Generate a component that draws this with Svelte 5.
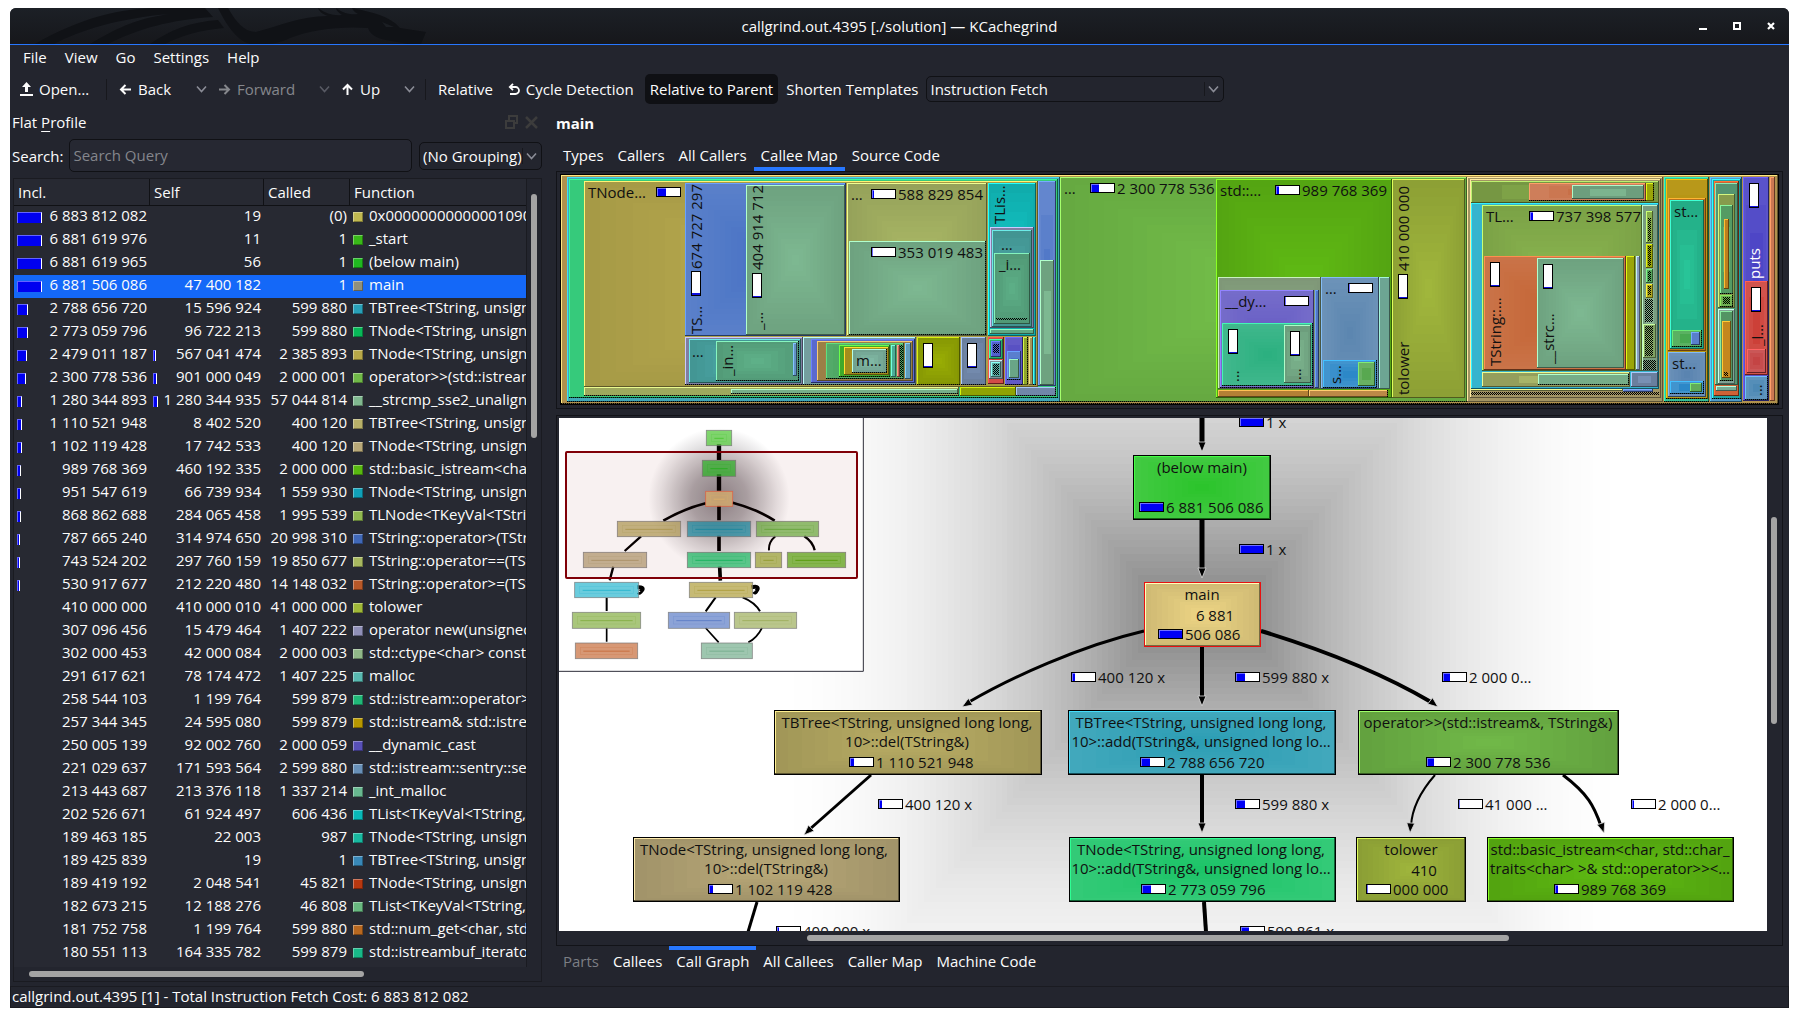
<script>
  const menus = ['File', 'View', 'Go', 'Settings', 'Help'];
  const topTabs = ['Types', 'Callers', 'All Callers', 'Callee Map', 'Source Code'];
  const bottomTabs = ['Parts', 'Callees', 'Call Graph', 'All Callees', 'Caller Map', 'Machine Code'];

  // incl, incl bar, self, self bar, called, colour, function
  const rows = [
    ['6 883 812 082', 25, '19', 0, '(0)', '#c0b850', '0x00000000000001090'],
    ['6 881 619 976', 25, '11', 0, '1', '#38b818', '_start'],
    ['6 881 619 965', 25, '56', 0, '1', '#20b820', '(below main)'],
    ['6 881 506 086', 25, '47 400 182', 0, '1', '#90907c', 'main'],
    ['2 788 656 720', 11, '15 596 924', 0, '599 880', '#28a0b8', 'TBTree<TString, unsigned long long, 10>::add'],
    ['2 773 059 796', 11, '96 722 213', 0, '599 880', '#08b858', 'TNode<TString, unsigned long long, 10>::add'],
    ['2 479 011 187', 10, '567 041 474', 3, '2 385 893', '#b8a848', 'TNode<TString, unsigned long long, 10>::find'],
    ['2 300 778 536', 9, '901 000 049', 4, '2 000 001', '#70b848', 'operator>>(std::istream&, TString&)'],
    ['1 280 344 893', 5, '1 280 344 935', 5, '57 044 814', '#80b890', '__strcmp_sse2_unaligned'],
    ['1 110 521 948', 5, '8 402 520', 0, '400 120', '#b8b068', 'TBTree<TString, unsigned long long, 10>::del'],
    ['1 102 119 428', 5, '17 742 533', 0, '400 120', '#b8a878', 'TNode<TString, unsigned long long, 10>::del'],
    ['989 768 369', 4, '460 192 335', 0, '2 000 000', '#58b810', 'std::basic_istream<char, std::char_traits>'],
    ['951 547 619', 4, '66 739 934', 0, '1 559 930', '#10a0b8', 'TNode<TString, unsigned long long, 10>'],
    ['868 862 688', 4, '284 065 458', 0, '1 995 539', '#90b850', 'TLNode<TKeyVal<TString, unsigned>>'],
    ['787 665 240', 3, '314 974 650', 0, '20 998 310', '#4068b8', 'TString::operator>(TString const&)'],
    ['743 524 202', 3, '297 760 159', 0, '19 850 677', '#a8b860', 'TString::operator==(TString const&)'],
    ['530 917 677', 3, '212 220 480', 0, '14 148 032', '#b85828', 'TString::operator>=(TString const&)'],
    ['410 000 000', 0, '410 000 010', 0, '41 000 000', '#a0b838', 'tolower'],
    ['307 096 456', 0, '15 479 464', 0, '1 407 222', '#9090b8', 'operator new(unsigned long)'],
    ['302 000 453', 0, '42 000 084', 0, '2 000 003', '#90b888', 'std::ctype<char> const& std::use_facet'],
    ['291 617 621', 0, '78 174 472', 0, '1 407 225', '#58b8b0', 'malloc'],
    ['258 544 103', 0, '1 199 764', 0, '599 879', '#20b878', 'std::istream::operator>>(unsigned long&)'],
    ['257 344 345', 0, '24 595 080', 0, '599 879', '#b89800', 'std::istream& std::istream::_M_extract'],
    ['250 005 139', 0, '92 002 760', 0, '2 000 059', '#5850b8', '__dynamic_cast'],
    ['221 029 637', 0, '171 593 564', 0, '2 599 880', '#6890b8', 'std::istream::sentry::sentry'],
    ['213 443 687', 0, '213 376 118', 0, '1 337 214', '#68b890', '_int_malloc'],
    ['202 526 671', 0, '61 924 497', 0, '606 436', '#08b8b8', 'TList<TKeyVal<TString, unsigned>>'],
    ['189 463 185', 0, '22 003', 0, '987', '#18b8a0', 'TNode<TString, unsigned long long, 10>'],
    ['189 425 839', 0, '19', 0, '1', '#3888b8', 'TBTree<TString, unsigned long long, 10>'],
    ['189 419 192', 0, '2 048 541', 0, '45 821', '#b83810', 'TNode<TString, unsigned long long, 10>'],
    ['182 673 215', 0, '12 188 276', 0, '46 808', '#68b880', 'TList<TKeyVal<TString, unsigned>>'],
    ['181 752 758', 0, '1 199 764', 0, '599 880', '#b86820', 'std::num_get<char, std::istreambuf>'],
    ['180 551 113', 0, '164 335 782', 0, '599 879', '#18b888', 'std::istreambuf_iterator<char>']
  ];

  const rgb = (c) => [1, 3, 5].map((i) => parseInt(c.slice(i, i + 2), 16));
  const css = (a) => `rgb(${a.map((v) => Math.round(v)).join(',')})`;
  const mix = (a, b, t) => a.map((v, i) => v + (b[i] - v) * t);
  function tones(c) {
    const m = rgb(c);
    const luma = m[0] * 0.3 + m[1] * 0.59 + m[2] * 0.11;
    return { mid: m, rim: luma > 138 ? m.map((v) => v * 0.88) : mix(m, [255, 255, 255], 0.1) };
  }
  const lightOf = (c) => css(rgb(c).map((v) => Math.min(255, v * 1.35 + 8)));
  const darkOf = (c) => css(rgb(c).map((v) => v * 0.5));

  // Cushion shading: nested frames that step from the rim tone to the middle tone
  function cushion(x, y, w, h, c) {
    const { mid, rim } = tones(c);
    const n = Math.max(1, Math.min(14, Math.floor(Math.min(w, h) / 6)));
    return Array.from({ length: n }, (_, i) => ({
      x: x + (w / 2) * (i / n),
      y: y + (h / 2) * (i / n),
      w: w * (1 - i / n),
      h: h * (1 - i / n),
      f: css(mix(rim, mid, n === 1 ? 0.5 : i / (n - 1)))
    }));
  }

  // left, top, right, bottom, colour, dotted sides (b, r) or f for a dotted fill
  const cells = [
    [561, 175, 1778, 404, '#c8a558', 'b'],
    [567, 177, 1060, 402, '#2b9eb0', 'b'],
    [569, 179, 1058, 398, '#20c46c', 'b'],
    [584, 181, 1038, 387, '#bdaf50'],
    [1038, 181, 1056, 386, '#5279c8'],
    [1040, 260, 1054, 385, '#7db891'],
    [685, 183, 846, 336, '#4872c4'],
    [746, 185, 845, 335, '#7db891'],
    [847, 183, 987, 336, '#aab866'],
    [849, 241, 986, 335, '#7db891', 'br'],
    [988, 183, 1036, 336, '#12c4c4'],
    [990, 227, 1034, 328, '#9090b8'],
    [992, 230, 1032, 327, '#4ba8a6'],
    [994, 253, 1030, 324, '#5cae86'],
    [996, 318, 1027, 320, '#5cae86', 'f'],
    [990, 329, 1034, 334, '#64b48c'],
    [685, 337, 803, 385, '#9090b8', 'b'],
    [689, 339, 801, 383, '#4caaa8'],
    [716, 341, 799, 381, '#5eb088', 'br'],
    [793, 343, 797, 376, '#5a8cc0'],
    [803, 337, 916, 385, '#84b4b4', 'b'],
    [811, 339, 915, 383, '#4858c8'],
    [817, 341, 913, 381, '#b09050'],
    [826, 343, 904, 379, '#40a058', 'b'],
    [839, 345, 890, 377, '#48c030', 'b'],
    [844, 347, 889, 375, '#b8a020'],
    [852, 349, 887, 373, '#80b8a4', 'br'],
    [891, 345, 896, 377, '#50b8a0'],
    [897, 345, 900, 377, '#d07060'],
    [900, 345, 903, 377, '#40a058', 'f'],
    [905, 343, 911, 379, '#5a98b8'],
    [917, 337, 960, 385, '#98ac04', 'b'],
    [961, 337, 986, 385, '#7890b4', 'b'],
    [988, 337, 1004, 384, '#cc3832'],
    [989, 339, 1003, 359, '#30c878'],
    [991, 341, 1001, 357, '#4858c8'],
    [993, 344, 999, 353, '#4858c8', 'f'],
    [989, 360, 1003, 379, '#90a8b0'],
    [991, 362, 1001, 377, '#60b8b0'],
    [993, 364, 999, 375, '#60b8b0', 'f'],
    [1005, 337, 1023, 385, '#5048c0', 'b'],
    [1007, 351, 1021, 380, '#4870c8', 'b'],
    [1009, 359, 1019, 378, '#70b090'],
    [1023, 337, 1028, 385, '#98b030', 'r'],
    [1029, 337, 1033, 385, '#b0a060'],
    [1033, 337, 1036, 385, '#28c8c8', 'b'],
    [584, 387, 959, 396, '#a8b464', 'b'],
    [731, 389, 958, 394, '#7db891', 'b'],
    [960, 387, 1016, 396, '#98ac04'],
    [1016, 387, 1056, 396, '#7890b4', 'br'],
    [1060, 177, 1467, 402, '#74c04a', 'b'],
    [1216, 179, 1392, 398, '#60bb14'],
    [1218, 277, 1321, 389, '#90ac88'],
    [1220, 290, 1314, 388, '#665cc4', 'b'],
    [1315, 290, 1319, 388, '#4870c0'],
    [1222, 323, 1313, 386, '#2cb080', 'br'],
    [1284, 325, 1311, 383, '#7cb48e'],
    [1321, 277, 1379, 389, '#5c86b0'],
    [1323, 360, 1377, 388, '#2c88c8', 'br'],
    [1358, 362, 1375, 386, '#58a850'],
    [1379, 277, 1390, 389, '#74b09c'],
    [1218, 390, 1309, 397, '#c08838'],
    [1309, 390, 1388, 397, '#c8924c', 'r'],
    [1392, 179, 1465, 398, '#a0b63c'],
    [1467, 177, 1663, 402, '#b8a870'],
    [1470, 179, 1661, 398, '#b8a870'],
    [1471, 181, 1659, 203, '#86ac4c'],
    [1529, 183, 1646, 201, '#c87048', 'b'],
    [1572, 185, 1644, 199, '#7cb48e'],
    [1646, 183, 1654, 201, '#a4b008', 'r'],
    [1471, 203, 1659, 389, '#20acc8'],
    [1482, 205, 1642, 371, '#8cb850'],
    [1484, 256, 1626, 370, '#c46434'],
    [1537, 258, 1624, 368, '#7db891'],
    [1626, 256, 1635, 370, '#a4b008'],
    [1636, 256, 1640, 370, '#90a8c8'],
    [1642, 205, 1658, 371, '#88b090'],
    [1646, 211, 1653, 243, '#90b850'],
    [1648, 218, 1651, 241, '#90b850', 'f'],
    [1646, 244, 1653, 268, '#a4b008'],
    [1648, 246, 1651, 266, '#a4b008', 'f'],
    [1646, 269, 1653, 283, '#58b060'],
    [1648, 271, 1651, 281, '#58b060', 'f'],
    [1646, 284, 1653, 298, '#b8b020'],
    [1648, 286, 1651, 295, '#b8b020', 'f'],
    [1645, 299, 1653, 322, '#88b090', 'f'],
    [1643, 324, 1656, 358, '#90b870'],
    [1645, 326, 1653, 356, '#90b870', 'f'],
    [1643, 360, 1656, 370, '#88b090', 'f'],
    [1482, 372, 1630, 387, '#a8b468'],
    [1538, 374, 1629, 385, '#7db891', 'br'],
    [1631, 372, 1658, 387, '#7890b4'],
    [1471, 389, 1623, 391, '#b0b868'],
    [1623, 389, 1653, 392, '#5878c8'],
    [1471, 392, 1659, 395, '#b8a870', 'f'],
    [1664, 177, 1709, 402, '#20b888', 'b'],
    [1666, 179, 1708, 399, '#b08c00', 'b'],
    [1668, 198, 1706, 351, '#d08020'],
    [1670, 200, 1704, 349, '#28c498'],
    [1672, 330, 1702, 347, '#48a850', 'br'],
    [1691, 332, 1700, 345, '#5078c8'],
    [1668, 352, 1706, 397, '#5a84b0'],
    [1670, 381, 1704, 394, '#2c88c8', 'br'],
    [1690, 383, 1702, 392, '#58a850'],
    [1710, 177, 1742, 402, '#3c90c0'],
    [1712, 179, 1741, 399, '#20b8b8', 'b'],
    [1714, 181, 1739, 396, '#c85020'],
    [1715, 183, 1738, 385, '#60a880'],
    [1718, 194, 1735, 308, '#98b058'],
    [1720, 205, 1733, 294, '#60b070', 'b'],
    [1724, 219, 1729, 289, '#c88820'],
    [1720, 295, 1733, 307, '#60a840', 'br'],
    [1723, 297, 1730, 304, '#60a840', 'f'],
    [1718, 309, 1735, 384, '#90b8a8'],
    [1720, 311, 1733, 381, '#60a870', 'b'],
    [1722, 321, 1731, 378, '#d09020'],
    [1724, 372, 1728, 376, '#d09020', 'f'],
    [1716, 386, 1737, 391, '#80b8a0'],
    [1743, 177, 1769, 401, '#4840c4'],
    [1745, 281, 1768, 375, '#cc4038'],
    [1747, 349, 1766, 373, '#c44444'],
    [1745, 376, 1768, 400, '#4c88b4', 'br'],
    [1770, 177, 1775, 401, '#c87048']
  ];

  // text, x, baseline, turned, white
  const mapTexts = [
    ['TNode…', 588, 198],
    ['674 727 297', 702, 269, 1],
    ['TS…', 702, 334, 1],
    ['404 914 712', 763, 270, 1],
    ['_…', 763, 330, 1],
    ['…', 851, 200],
    ['588 829 854', 898, 200],
    ['353 019 483', 898, 258],
    ['TLis…', 1005, 224, 1],
    ['…', 1001, 250],
    ['_i…', 999, 270],
    ['…', 692, 357],
    ['_in…', 733, 376, 1],
    ['m…', 856, 366],
    ['…', 1064, 194],
    ['2 300 778 536', 1117, 194],
    ['std::…', 1220, 196],
    ['989 768 369', 1302, 196],
    ['__dy…', 1225, 307],
    ['…', 1325, 294],
    ['…', 1239, 382, 1],
    ['…', 1301, 380, 1],
    ['s…', 1341, 384, 1],
    ['410 000 000', 1409, 271, 1],
    ['tolower', 1409, 395, 1],
    ['TL…', 1486, 222],
    ['737 398 577', 1556, 222],
    ['TString::…', 1501, 366, 1],
    ['__strc…', 1554, 364, 1],
    ['st…', 1674, 217],
    ['st…', 1672, 369],
    ['puts', 1760, 279, 1, 1],
    ['_l…', 1763, 346, 1],
    ['…', 1762, 396, 1]
  ];
  // x, y, blue length, upright
  const mapBars = [
    [656, 187, 9, 0], [691, 271, 2, 1], [752, 273, 1, 1], [871, 189, 2, 0], [871, 247, 1, 0],
    [923, 343, 1, 1], [967, 343, 1, 1], [1090, 183, 8, 0], [1275, 185, 3, 0], [1284, 296, 1, 0],
    [1348, 283, 1, 0], [1228, 329, 1, 1], [1290, 331, 1, 1], [1398, 274, 1, 1], [1529, 211, 3, 0],
    [1490, 262, 1, 1], [1543, 264, 1, 1], [1749, 183, 1, 1], [1751, 287, 1, 1]
  ];

  // Backdrop of the graph: frames growing out of the selected node
  const halo = Array.from({ length: 64 }, (_, i) => {
    const t = 1 - i / 64;
    const hw = 58 + t * 380, hh = 32 + t * 443;
    const v = Math.round(255 - 111 * (1 - t) * (1 - t));
    return { x: 1202 - hw, y: 614 - hh, w: hw * 2, h: hh * 2, f: `rgb(${v},${v},${v})` };
  });

  // x, y, w, colour, [text, x, dy, anchor], bar x, blue length
  const nodes = [
    { x: 1133, y: 455, w: 138, c: '#2cc42c', bx: 1139, b: 23, t: [['(below main)', 1202, 18, 'middle'], ['6 881 506 086', 1166, 58]] },
    { x: 1144, y: 582, w: 117, c: '#ecd484', bx: 1158, b: 23, sel: true, t: [['main', 1202, 18, 'middle'], ['6 881', 1215, 39, 'middle'], ['506 086', 1185, 58]] },
    { x: 774, y: 710, w: 268, c: '#b8ac64', bx: 849, b: 4, t: [['TBTree<TString, unsigned long long,', 907, 18, 'middle'], ['10>::del(TString&)', 907, 37, 'middle'], ['1 110 521 948', 876, 58]] },
    { x: 1068, y: 710, w: 268, c: '#2c9eb4', bx: 1140, b: 9, t: [['TBTree<TString, unsigned long long,', 1201, 18, 'middle'], ['10>::add(TString&, unsigned long lo…', 1201, 37, 'middle'], ['2 788 656 720', 1167, 58]] },
    { x: 1358, y: 710, w: 261, c: '#70b848', bx: 1426, b: 7, t: [['operator>>(std::istream&, TString&)', 1488, 18, 'middle'], ['2 300 778 536', 1453, 58]] },
    { x: 633, y: 837, w: 267, c: '#b8a878', bx: 708, b: 4, t: [['TNode<TString, unsigned long long,', 764, 18, 'middle'], ['10>::del(TString&)', 766, 37, 'middle'], ['1 102 119 428', 735, 58]] },
    { x: 1069, y: 837, w: 267, c: '#1cc468', bx: 1141, b: 9, t: [['TNode<TString, unsigned long long,', 1201, 18, 'middle'], ['10>::add(TString&, unsigned long lo…', 1201, 37, 'middle'], ['2 773 059 796', 1168, 58]] },
    { x: 1356, y: 837, w: 110, c: '#9eb43c', bx: 1366, b: 1, t: [['tolower', 1411, 18, 'middle'], ['410', 1424, 39, 'middle'], ['000 000', 1393, 58]] },
    { x: 1487, y: 837, w: 247, c: '#5eba12', bx: 1554, b: 3, t: [['std::basic_istream<char, std::char_', 1610, 18, 'middle'], ['traits<char> >& std::operator>><…', 1610, 37, 'middle'], ['989 768 369', 1581, 58]] }
  ];

  // path, width, head x, head y, head angle
  const edges = [
    ['M1202 418V442', 5, 1202, 452, 0],
    ['M1202 520V570', 5, 1202, 578, 0],
    ['M1202 647V698', 4, 1202, 706, 0],
    ['M1144 631C1080 646 1010 678 969 702', 3, 962, 707, 58],
    ['M1261 631C1330 652 1390 678 1431 702', 4, 1438, 707, -52],
    ['M871 775L810 829', 3, 804, 835, 46],
    ['M1202 775V825', 4, 1202, 833, 0],
    ['M1435 775C1420 792 1412 808 1411 826', 2, 1410, 833, 4],
    ['M1563 775C1588 794 1594 806 1601 826', 3, 1604, 833, -18],
    ['M757 902L748 932', 3],
    ['M1204 902L1206 932', 4]
  ];
  const labels = [
    ['1 x', 1239, 417, 23], ['1 x', 1239, 544, 23],
    ['400 120 x', 1071, 672, 3], ['599 880 x', 1235, 672, 9], ['2 000 0…', 1442, 672, 7],
    ['400 120 x', 878, 799, 3], ['599 880 x', 1235, 799, 9], ['41 000 …', 1458, 799, 1], ['2 000 0…', 1631, 799, 2],
    ['400 000 x', 776, 926, 2], ['599 861 x', 1240, 926, 8]
  ];

  // Thumbnail of the whole graph, in thirds of a pixel
  const mini = [
    [469, 76, 76, 46, '#50c838'], [457, 166, 100, 48, '#28b828'], [467, 259, 81, 45, '#e0b870', '#e86040'],
    [202, 349, 190, 46, '#b0a058'], [412, 349, 190, 46, '#1890a8'], [619, 349, 187, 46, '#68b040'],
    [100, 442, 190, 46, '#b09c70'], [412, 442, 190, 46, '#18c068'], [616, 442, 79, 46, '#98a838'], [712, 442, 175, 46, '#58a810'],
    [74, 532, 192, 46, '#30b8d0'], [418, 532, 190, 46, '#b0a040'], [67, 622, 205, 48, '#88b048'],
    [355, 622, 184, 48, '#6080c8'], [553, 622, 187, 48, '#a0b060'], [76, 714, 187, 47, '#c87040'], [454, 714, 153, 47, '#78b090']
  ];
  const miniEdges = [
    ['M507 118V165M507 208V257', 13], ['M507 302V346M507 392V438M509 485L511 527', 11],
    ['M467 295Q400 312 340 347M548 293Q620 312 674 347', 8],
    ['M273 394L224 438M190 485L179 526M763 394Q788 410 794 436', 7],
    ['M676 394Q655 412 657 436M170 578V618M497 577L467 619M578 577Q615 592 630 619', 6],
    ['M170 668V710M467 669L506 712M636 669Q620 700 595 712', 5],
    ['M262 547Q284 546 276 556T266 562M604 547Q628 542 622 554T612 560', 12]
  ];
</script>

{#snippet gauge(x, y, n, upright)}
  <g class="gauge" shape-rendering="crispEdges">
    {#if upright}
      <rect {x} {y} width="10" height="25" fill="#000" />
      <rect x={x + 1} y={y + 1} width="8" height="23" fill="#fff" />
      <rect x={x + 1} y={y + 24 - n} width="8" height={n} fill="#1010e0" />
    {:else}
      <rect {x} {y} width="25" height="10" fill="#000" />
      <rect x={x + 1} y={y + 1} width="23" height="8" fill="#fff" />
      <rect x={x + 1} y={y + 1} width={n} height="8" fill="#0000f4" />
      <path d="M{x + 1} {y + 9}V{y + 1}H{x + 1 + n}V{y + 2}H{x + 2}V{y + 9}Z" fill="#7070ff" />
    {/if}
  </g>
{/snippet}

{#snippet chevron()}
  <svg class="chev" width="11" height="8" viewBox="0 0 11 8" aria-hidden="true"><path d="M1 1.5L5.500 6.500L10 1.500" fill="none" stroke="currentColor" stroke-width="1.600" /></svg>
{/snippet}

{#snippet arrow(d)}
  <svg width="13" height="13" viewBox="0 0 13 13" aria-hidden="true"><path {d} fill="none" stroke="currentColor" stroke-width="2" /></svg>
{/snippet}

<div class="window">
  <header class="titlebar">
    <svg class="dragon" width="430" height="36" viewBox="0 0 430 36" aria-hidden="true">
      <g fill="#101216">
        <path d="M25 36C70 10 110 0 150 0L195 0L203 9C160 12 130 20 98 36H80C110 18 130 10 160 6C110 10 70 22 44 36Z" />
        <path d="M140 36C160 22 180 14 208 12L214 20C190 22 170 28 155 36Z" />
        <path d="M208 0H218C226 14 234 24 246 24C270 18 290 8 318 8C312 6 309 3 308 0C316 6 324 8 332 7C328 4 326 2 326 0C334 6 342 7 348 6C344 4 343 2 342 0C362 4 380 8 390 20L416 24L411 36H398L376 32C366 30 360 26 358 20C330 18 300 22 280 30C270 35 262 36 250 36H240C226 32 216 16 208 0Z" />
      </g>
      <path d="M372 14L384 19L376 19Z" fill="#1b1e23" />
    </svg>
    <h1>callgrind.out.4395 [./solution] — KCachegrind</h1>
    <div class="winbtns">
      <button aria-label="Minimize"><svg width="8" height="10" viewBox="0 0 8 10"><path d="M0 7H8V9H0Z" fill="#fff" /></svg></button>
      <button aria-label="Maximize"><svg width="8" height="10" viewBox="0 0 8 10"><path d="M1 2H7V8H1Z" fill="none" stroke="#fff" stroke-width="2" /></svg></button>
      <button aria-label="Close"><svg width="8" height="10" viewBox="0 0 8 10"><path d="M1 2L7 8M7 2L1 8" stroke="#fff" stroke-width="2.200" /></svg></button>
    </div>
  </header>

  <nav class="menubar">
    {#each menus as m}<button>{m}</button>{/each}
  </nav>

  <div class="toolbar">
    <button class="tool open">
      <svg width="13" height="14" viewBox="0 0 13 14" aria-hidden="true"><path d="M6.500 0L11 5H8V10H5V5H2ZM0 12H13V14H0Z" fill="currentColor" /></svg>
      Open…
    </button>
    <span class="sep"></span>
    <button class="tool drop back">{@render arrow('M12 6.5H2M6.500 2L2 6.500L6.500 11')}<span>Back</span>{@render chevron()}</button>
    <button class="tool drop off">{@render arrow('M1 6.5H11M6.500 2L11 6.500L6.500 11')}<span>Forward</span>{@render chevron()}</button>
    <button class="tool drop up">{@render arrow('M6.500 12V2M2 6.500L6.500 2L11 6.500')}<span>Up</span>{@render chevron()}</button>
    <span class="sep"></span>
    <button class="tool plain">Relative</button>
    <button class="tool cycle">
      <svg width="12" height="13" viewBox="0 0 12 13" aria-hidden="true"><path d="M2 4H7.500A3.500 3.500 0 0 1 7.500 11H2M5 0.800L1.800 4L5 7.200" fill="none" stroke="currentColor" stroke-width="1.800" /></svg>
      Cycle Detection
    </button>
    <button class="tool pressed" aria-pressed="true">Relative to Parent</button>
    <button class="tool plain">Shorten Templates</button>
    <label class="combo event">
      <select aria-label="Event type"><option>Instruction Fetch</option></select>
      {@render chevron()}
    </label>
  </div>

  <main class="content">
    <section class="dock">
      <div class="docktitle">
        <h2>Flat <u>P</u>rofile</h2>
        <button aria-label="Float"><svg width="13" height="14" viewBox="0 0 13 14"><path d="M4 5V1H12V8H9M1 6H9V13H1Z" fill="none" stroke="#3c3c3c" stroke-width="2" /></svg></button>
        <button aria-label="Close dock"><svg width="13" height="13" viewBox="0 0 13 13"><path d="M1 1L12 12M12 1L1 12" stroke="#3c3c3c" stroke-width="2.500" /></svg></button>
      </div>
      <div class="search">
        <label for="q">Search:</label>
        <input id="q" type="text" placeholder="Search Query" />
        <label class="combo group">
          <select aria-label="Grouping"><option>(No Grouping)</option></select>
          {@render chevron()}
        </label>
      </div>
      <div class="listframe">
        <div class="listrow">
          <div class="tablewrap">
            <table>
              <colgroup><col class="c1" /><col class="c2" /><col class="c3" /><col /></colgroup>
              <thead><tr><th>Incl.</th><th>Self</th><th>Called</th><th>Function</th></tr></thead>
              <tbody>
                {#each rows as r, i}
                  <tr class:selected={i === 3}>
                    <td><div class="num">{#if r[1]}<i class="bar" style:width="{r[1]}px"></i>{/if}<span>{r[0]}</span></div></td>
                    <td><div class="num">{#if r[3]}<i class="bar" style:width="{r[3]}px"></i>{/if}<span>{r[2]}</span></div></td>
                    <td><div class="num"><span>{r[4]}</span></div></td>
                    <td><div class="fn"><i class="chip" style:background={r[5]}></i><span>{r[6]}</span></div></td>
                  </tr>
                {/each}
              </tbody>
            </table>
          </div>
          <div class="vbar"><div class="thumb"></div></div>
        </div>
        <div class="hbar"><div class="thumb"></div></div>
      </div>
    </section>

    <section class="views">
      <h2 class="current">main</h2>
      <div class="tabs top" role="tablist">
        {#each topTabs as t}<button role="tab" aria-selected={t === 'Callee Map'}>{t}</button>{/each}
      </div>
      <div class="mapframe">
        <svg class="map" viewBox="560 174 1219 231" role="img" aria-label="Callee map">
          <defs>
            <pattern id="dots" width="2" height="2" patternUnits="userSpaceOnUse"><path d="M0 0H1V1H0ZM1 1H2V2H1Z" fill="#000" /></pattern>
          </defs>
          <g shape-rendering="crispEdges">
            <rect x="560" y="174" width="1219" height="231" fill="#000" />
            {#each cells as [l, t, r, b, c, d]}
              {#if d === 'f'}
                <rect x={l} y={t} width={r - l} height={b - t} fill="url(#dots)" />
              {:else}
                {#each cushion(l, t, r - l, b - t, c) as k}
                  <rect x={k.x} y={k.y} width={k.w} height={k.h} fill={k.f} />
                {/each}
                <path d="M{l} {b}V{t}H{r}V{t + 1}H{l + 1}V{b}Z" fill={lightOf(c)} />
                <path d="M{r} {t}V{b}H{l}V{b - 1}H{r - 1}V{t}Z" fill={darkOf(c)} />
                {#if d?.includes('b')}<path d="M{l} {b - 0.5}H{r}" stroke="#000" stroke-dasharray="1 1" />{/if}
                {#if d?.includes('r')}<path d="M{r - 0.5} {t}V{b}" stroke="#000" stroke-dasharray="1 1" />{/if}
              {/if}
            {/each}
          </g>
          {#each mapBars as [x, y, n, up]}{@render gauge(x, y, n, up)}{/each}
          {#each mapTexts as [s, x, y, turned, white]}
            <text class:white transform={turned ? `translate(${x} ${y}) rotate(-90)` : `translate(${x} ${y})`}>{s}</text>
          {/each}
        </svg>
      </div>

      <div class="graphframe">
        <div class="graphrow">
          <svg class="graph" viewBox="559 418 1208 513" role="img" aria-label="Call graph">
            <defs>
              <radialGradient id="glow"><stop offset="0" stop-color="#8c868a" /><stop offset="0.400" stop-color="#8c868a" stop-opacity="0.720" /><stop offset="0.800" stop-color="#8c868a" stop-opacity="0.220" /><stop offset="1" stop-color="#8c868a" stop-opacity="0" /></radialGradient>
            </defs>
            <rect x="559" y="418" width="1208" height="513" fill="#fff" />
            <g shape-rendering="crispEdges">
              {#each halo as k}<rect x={k.x} y={k.y} width={k.w} height={k.h} fill={k.f} />{/each}
            </g>
            {#each edges as [d, w, hx, hy, a]}
              <path {d} fill="none" stroke="#000" stroke-width={w} />
              {#if hx}<path d="M0 0L-4 -10H4Z" transform="translate({hx} {hy}) rotate({a})" stroke="#ddd" stroke-width="0.800" />{/if}
            {/each}
            {#each labels as [s, x, y, n]}
              {@render gauge(x, y, n, false)}
              <text x={x + 27} y={y + 11}>{s}</text>
            {/each}
            {#each nodes as n}
              <g shape-rendering="crispEdges">
                <rect x={n.x} y={n.y} width={n.w} height="65" fill={n.sel ? '#e81010' : '#000'} />
                {#each cushion(n.x + 1, n.y + 1, n.w - 2, 63, n.c) as k}
                  <rect x={k.x} y={k.y} width={k.w} height={k.h} fill={k.f} />
                {/each}
                <path d="M{n.x + 1} {n.y + 64}v-63h{n.w - 2}v1h{3 - n.w}v62Z" fill={lightOf(n.c)} />
                <path d="M{n.x + n.w - 1} {n.y + 1}v63h{2 - n.w}v-1h{n.w - 3}v-62Z" fill={darkOf(n.c)} />
              </g>
              {@render gauge(n.bx, n.y + 47, n.b, false)}
              {#each n.t as [s, x, dy, anchor]}<text {x} y={n.y + dy} text-anchor={anchor ?? 'start'}>{s}</text>{/each}
            {/each}
            <g transform="translate(550 405) scale(0.33333)">
              <rect x="27" y="39" width="914" height="761" fill="#fff" />
              <path d="M940 39V799H27" fill="none" stroke="#2c2c38" stroke-width="3" />
              <circle cx="507" cy="281" r="212" fill="url(#glow)" />
              {#each miniEdges as [d, w]}<path {d} fill="none" stroke="#000" stroke-width={w} />{/each}
              {#each mini as [x, y, w, h, c, s]}
                <rect {x} {y} width={w} height={h} fill={c} fill-opacity="0.720" stroke={s ?? '#777'} stroke-width="2.500" stroke-opacity="0.800" />
                <rect x={x + 15} y={y + 13} width={w - 30} height={h - 26} fill="none" stroke={c} stroke-width="2" stroke-opacity="0.350" />
                <path d="M{x + 24} {y + h / 2 + 1}H{x + w - 24}" stroke={c} stroke-width="3" />
              {/each}
              <rect x="48" y="141" width="873" height="378" rx="3" fill="#800000" fill-opacity="0.055" stroke="#800008" stroke-width="6" />
            </g>
          </svg>
          <div class="vbar"><div class="thumb"></div></div>
        </div>
        <div class="hbar"><div class="thumb"></div></div>
      </div>
      <div class="tabs bottom" role="tablist">
        {#each bottomTabs as t}<button role="tab" aria-selected={t === 'Call Graph'} disabled={t === 'Parts'}>{t}</button>{/each}
      </div>
    </section>
  </main>

  <footer>callgrind.out.4395 [1] - Total Instruction Fetch Cost: 6 883 812 082</footer>
</div>

<style>
  :global(body) { background: #fff; }
  .window {
    margin: 8px 10px 10px;
    background: #23252e;
    color: #fcfcfc;
    border-radius: 6px 6px 0 0;
    overflow: hidden;
    font: 15px/20px "Open Sans", "Noto Sans", sans-serif;
  }
  button, input, select { font: inherit; color: inherit; background: none; border: 0; padding: 0; margin: 0; }
  h1, h2 { margin: 0; font: inherit; }
  svg { display: block; flex: none; }

  .titlebar {
    position: relative;
    display: grid;
    grid-template-columns: 1fr auto 1fr;
    align-items: center;
    height: 36px;
    background: linear-gradient(#1c2026, #16171b);
    border-bottom: 1px solid #2777ff;
  }
  .dragon { position: absolute; left: 0; top: 0; }
  h1 { grid-column: 2; position: relative; }
  .winbtns { display: flex; justify-content: flex-end; gap: 26px; padding-right: 14px; }

  .menubar { display: flex; gap: 18px; padding: 0 13px 4px; height: 24px; align-items: center; }
  .toolbar { display: flex; align-items: center; height: 32px; }
  .tool { display: flex; align-items: center; white-space: nowrap; }
  .open { gap: 6px; width: 96px; padding-left: 10px; box-sizing: border-box; }
  .sep { width: 1px; height: 21px; background: #17181d; margin-right: 12px; }
  .drop { gap: 6px; }
  .back { width: 88px; margin-right: 11px; }
  .off { width: 112px; margin-right: 11px; color: #85878c; }
  .up { width: 74px; margin-right: 10px; }
  .drop span { flex: 1; text-align: left; }
  .drop :global(.chev) { color: #8a8c96; }
  .off :global(.chev) { color: #585a64; }
  .plain { padding-right: 8px; }
  .cycle { gap: 6px; padding: 0 11px 0 7px; }
  .pressed { background: #0f1014; border-radius: 5px; height: 30px; padding: 0 5px; margin-right: 8px; }

  .combo { position: relative; display: flex; align-items: center; border: 1px solid #101115; border-radius: 5px; box-sizing: border-box; }
  .combo select { appearance: none; flex: 1; padding-left: 3px; height: 100%; min-width: 0; }
  .combo :global(.chev) { color: #8a8c96; margin: 0 4px; }
  .combo::after { content: ""; position: absolute; right: 18px; top: 5px; bottom: 5px; width: 1px; background: #17181d; }
  .event { width: 298px; height: 26px; }
  .group { width: 123px; height: 28px; }

  .content { display: flex; gap: 14px; padding: 0 6px 0 2px; }
  .dock { width: 530px; flex: none; display: flex; flex-direction: column; }
  .docktitle { display: flex; align-items: center; height: 34px; gap: 7px; padding-right: 4px; }
  .docktitle h2 { flex: 1; }
  .docktitle u { text-underline-offset: 3px; }
  .search { display: flex; align-items: center; height: 33px; margin-bottom: 6px; }
  .search input { flex: 1; min-width: 0; height: 33px; box-sizing: border-box; margin: 0 7px 0 6px; padding: 0 3px 2px; border: 1px solid #101115; border-radius: 5px; background: #262832; }
  .search input::placeholder { color: #84868c; opacity: 1; }
  .listframe { border: 1px solid #1a1b21; display: flex; flex-direction: column; flex: 1; margin-left: 1px; }
  .listrow { display: flex; flex: 1; }
  .tablewrap { flex: 1; min-width: 0; padding-bottom: 2px; background: #272932; border-right: 1px solid #1a1b21; }
  table { width: 100%; table-layout: fixed; border-collapse: separate; border-spacing: 0; }
  .c1 { width: 136px; }
  .c2 { width: 114px; }
  .c3 { width: 86px; }
  th { height: 27px; box-sizing: border-box; padding: 0 0 0 4px; text-align: left; font-weight: 400; border-right: 1px solid #101115; border-bottom: 1px solid #101115; }
  th:last-child { border-right: 0; }
  td { padding: 0; height: 23px; }
  .num, .fn { display: flex; align-items: center; line-height: 19px; padding-bottom: 4px; white-space: nowrap; overflow: hidden; }
  .num { justify-content: flex-end; padding-right: 3px; padding-left: 3px; }
  .num span { margin-left: auto; }
  .bar { height: 11px; box-sizing: border-box; flex: none; background: #0000f0; border: solid #6464ff; border-width: 1px 0 0 1px; border-right: 1px solid #fff; margin-top: 3px; }
  .fn { padding-left: 3px; gap: 6px; }
  .chip { width: 10px; height: 10px; flex: none; box-sizing: border-box; border: 1px solid; border-color: #ffffff55 #00000055 #00000055 #ffffff55; margin-top: 3px; }
  .selected td { background: #1468f8; }

  .vbar { width: 14px; flex: none; }
  .vbar .thumb { width: 6px; margin: 15px auto 0 4px; height: 244px; border-radius: 3px; background: #a4a4a4; }
  .hbar { height: 14px; display: flex; align-items: center; }
  .hbar .thumb { height: 6px; border-radius: 3px; background: #a4a4a4; margin-left: 15px; width: 335px; }

  .views { flex: 1; min-width: 0; display: flex; flex-direction: column; }
  .current { font-weight: 700; height: 37px; line-height: 37px; }
  .tabs { display: flex; }
  .tabs button { padding: 0 7px; height: 29px; white-space: nowrap; border: 0 solid transparent; box-sizing: border-box; }
  .top button { border-bottom-width: 4px; }
  .bottom button { border-top-width: 4px; height: 26px; }
  .tabs button[aria-selected="true"] { border-color: #2777ff; }
  .tabs button:disabled { color: #7c7e84; }
  .mapframe { border: 1px solid #121318; padding: 2px 3px 3px; }
  .map, .graph { width: 100%; height: auto; }
  text { font: 15px "Open Sans", "Noto Sans", sans-serif; fill: #101010; }
  .white { fill: #fff; }
  .graphframe { margin-top: 6px; border: 1px solid #121318; padding: 2px 0 0 2px; }
  .graphrow { display: flex; }
  .graph { flex: 1; min-width: 0; }
  .graphrow .vbar { width: 15px; }
  .graphrow .thumb { margin-top: 99px; height: 207px; }
  .graphframe .hbar .thumb { margin-left: 248px; width: 702px; }
  footer { height: 20px; line-height: 18px; margin-top: 4px; padding-left: 1px; border: 1px solid #1a1b21; }
</style>
